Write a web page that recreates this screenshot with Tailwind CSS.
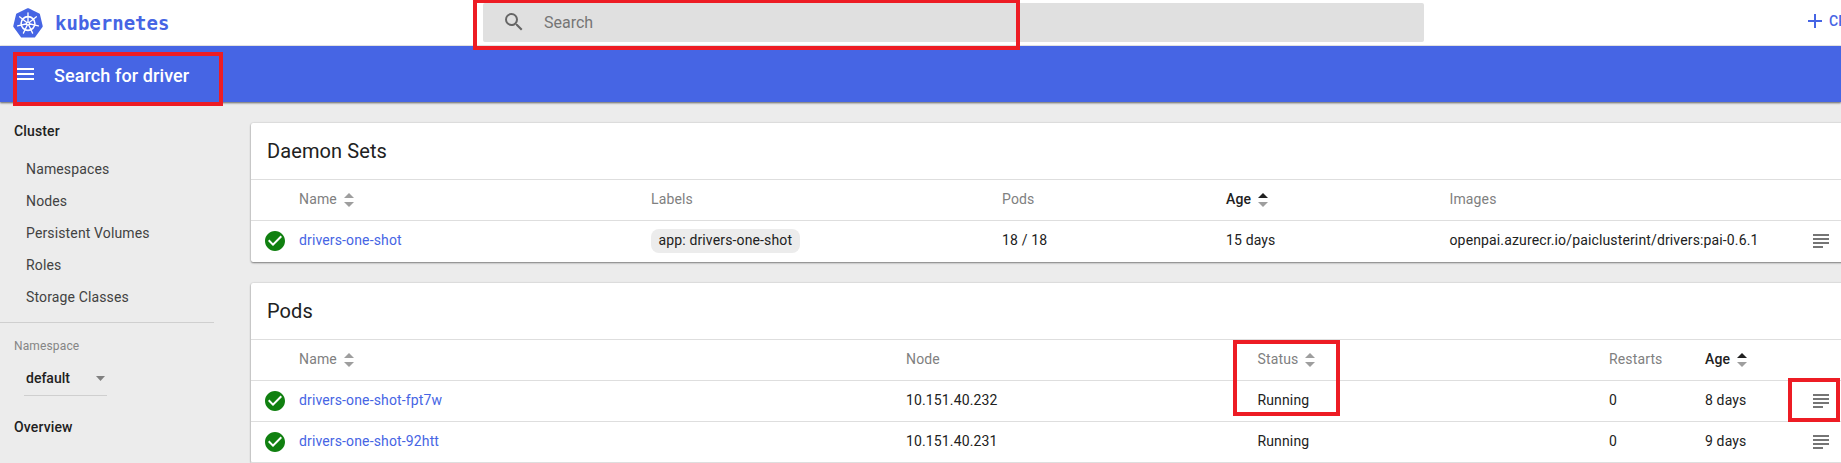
<!DOCTYPE html>
<html lang="en">
<head>
<meta charset="utf-8">
<title>Kubernetes Dashboard</title>
<script src="https://cdn.jsdelivr.net/npm/@tailwindcss/browser@4"></script>
</head>
<body class="relative flex h-[463px] w-[1841px] flex-col overflow-hidden bg-[#ececec] font-['Roboto',sans-serif] text-sm tracking-[0.01em] text-[#212121]">
<svg class="hidden">
  <symbol id="check" viewBox="0 0 24 24"><path fill="#108010" d="M12 2C6.48 2 2 6.48 2 12s4.480 10 10 10 10-4.480 10-10S17.520 2 12 2zm-2 15l-5-5 1.410-1.410L10 14.170l7.590-7.590L19 8l-9 9z"/></symbol>
  <symbol id="subject" viewBox="0 0 24 24"><path fill="#757575" d="M14 17H4v2h10v-2zm6-8H4v2h16V9zM4 15h16v-2H4v2zM4 5v2h16V5H4z"/></symbol>
  <symbol id="sort" viewBox="0 0 10 14"><path fill="currentColor" d="M0 5h10L5 0z"/><path fill="#9e9e9e" d="M0 9h10l-5 5z"/></symbol>
</svg>

<header class="flex h-[46px] shrink-0 items-start border-b border-[#ececec] bg-white">
  <div class="flex w-[483px] shrink-0 items-center pl-[13px]">
    <svg class="mt-[7px] h-[30px] w-[30px]" viewBox="0 0 30 30" fill="none">
      <path fill="#4665e4" stroke="#4665e4" stroke-width="2.500" stroke-linejoin="round" d="M15 1.500 25.700 6.600 28.500 18.300 21.200 28.200H8.800L1.500 18.300 4.300 6.600z"/>
      <circle cx="15" cy="15.500" r="6.900" stroke="#fff" stroke-width="1.600"/>
      <path stroke="#fff" stroke-width="1.300" stroke-linecap="round" d="M15 15.500V4.800M15 15.500 23.400 8.800M15 15.500 25.400 17.900M15 15.500 19.600 25.100M15 15.500 10.400 25.100M15 15.500 4.600 17.900M15 15.500 6.600 8.800"/>
      <circle cx="15" cy="15.500" r="2" fill="#fff"/><circle cx="15" cy="15.500" r=".8" fill="#4665e4"/>
    </svg>
    <span class="mt-2 ml-3 font-['DejaVu_Sans_Mono',monospace] text-[19px] leading-[30px] font-bold tracking-normal text-[#4665e4]">kubernetes</span>
  </div>
  <div class="mt-[3px] flex h-[39px] w-[941px] shrink-0 items-center rounded-xs bg-[#e0e0e0] pl-[19px] text-base tracking-normal text-[#757575]">
    <svg class="-mt-px mr-[18px] size-6" viewBox="0 0 24 24"><path fill="#666" d="M15.500 14h-.79l-.28-.27A6.471 6.471 0 0 0 16 9.500 6.500 6.500 0 1 0 9.500 16c1.610 0 3.090-.59 4.230-1.570l.27.28v.79l5 4.990L20.490 19l-4.990-5zm-6 0C7.010 14 5 11.990 5 9.500S7.010 5 9.500 5 14 7.010 14 9.500 11.990 14 9.500 14z"/></svg>
    <span>Search</span>
  </div>
  <div class="ml-[378.500px] flex shrink-0 items-center gap-[2.500px] pt-[9px] text-[#4665e4]">
    <svg class="size-6" viewBox="0 0 24 24"><path fill="currentColor" d="M19 13h-6v6h-2v-6H5v-2h6V5h2v6h6v2z"/></svg>
    <span class="font-medium">CREATE</span>
  </div>
</header>

<div class="z-10 flex h-14 shrink-0 items-center bg-[#4665e4] pl-[13px] text-white shadow-[0_1px_2px_rgba(0,0,0,0.6)]">
  <svg class="mr-[17px] size-6" viewBox="0 0 24 24"><path fill="#fff" d="M3 18h18v-2H3v2zm0-5h18v-2H3v2zm0-7v2h18V6H3z"/></svg>
  <h1 class="pt-[3px] text-lg leading-6 font-medium tracking-[0.1px]">Search for driver</h1>
</div>

<div class="flex min-h-0 flex-1">
  <nav class="w-[214px] shrink-0 pt-[13px]">
    <div class="h-8 pl-3.5 leading-8 font-medium">Cluster</div>
    <ul class="mt-1.5 pl-[26px] leading-8 text-[#424242]">
      <li>Namespaces</li><li>Nodes</li><li>Persistent Volumes</li><li>Roles</li><li>Storage Classes</li>
    </ul>
    <div class="mt-[9px] border-t border-[#cfcfcf] pt-[15px] pl-3.5">
      <div class="text-xs leading-4 text-[#858585]">Namespace</div>
      <div class="mt-[13px] ml-2.5 flex h-[29px] w-[83px] items-center justify-between border-b border-[#cfcfcf] pr-0.5 pb-1.5 pl-0.5">
        <span class="font-medium tracking-normal">default</span>
        <svg class="h-[5px] w-[9px]" viewBox="0 0 9 5"><path fill="#808080" d="M0 0h9L4.500 5z"/></svg>
      </div>
      <div class="mt-[21px] leading-5 font-medium">Overview</div>
    </div>
  </nav>

  <main class="ml-[37px] w-[1620px] shrink-0 pt-[21px]">
    <section class="rounded-xs bg-white shadow-[0_1px_2px_rgba(0,0,0,0.45),0_0_2px_rgba(0,0,0,0.15)]">
      <h2 class="flex h-14 items-center pl-4 text-xl tracking-[0.1px]">Daemon Sets</h2>
      <div class="grid h-[41px] grid-cols-[48px_352px_351px_224px_223.500px_1fr] items-center border-t border-[#dedede] text-[#808080] [&>span]:pb-0.5">
        <span></span>
        <span class="flex items-center gap-[7px]">Name <svg class="mt-0.5 h-3.5 w-2.5 text-[#9e9e9e]"><use href="#sort"/></svg></span>
        <span>Labels</span><span>Pods</span>
        <span class="flex items-center gap-[7px] font-medium text-[#212121]">Age <svg class="mt-0.5 h-3.5 w-2.5"><use href="#sort"/></svg></span>
        <span>Images</span>
      </div>
      <div class="grid h-[42px] grid-cols-[48px_352px_351px_224px_223.500px_359.500px_24px] items-center border-t border-[#dedede] pb-px [&>a]:pb-0.5 [&>span]:pb-0.5">
        <svg class="ml-3 size-6"><use href="#check"/></svg>
        <a class="text-[#4665e4]">drivers-one-shot</a>
        <div class="flex"><span class="rounded-lg bg-[#ececec] px-[7.500px] pb-0.5 leading-[22px]">app: drivers-one-shot</span></div>
        <span>18 / 18</span><span>15 days</span>
        <span>openpai.azurecr.io/paiclusterint/drivers:pai-0.6.1</span>
        <svg class="size-6"><use href="#subject"/></svg>
      </div>
    </section>

    <section class="mt-[21px] rounded-xs bg-white shadow-[0_1px_2px_rgba(0,0,0,0.45),0_0_2px_rgba(0,0,0,0.15)]">
      <h2 class="flex h-14 items-center pl-4 text-xl tracking-[0.1px]">Pods</h2>
      <div class="grid h-[41px] grid-cols-[48px_607px_351.500px_351.500px_96px_1fr] items-center border-t border-[#dedede] text-[#808080] [&>span]:pb-0.5">
        <span></span>
        <span class="flex items-center gap-[7px]">Name <svg class="mt-0.5 h-3.5 w-2.5 text-[#9e9e9e]"><use href="#sort"/></svg></span>
        <span>Node</span>
        <span class="flex items-center gap-[7px]">Status <svg class="mt-0.5 h-3.5 w-2.5 text-[#9e9e9e]"><use href="#sort"/></svg></span>
        <span>Restarts</span>
        <span class="flex items-center gap-[7px] font-medium text-[#212121]">Age <svg class="mt-0.5 h-3.5 w-2.5"><use href="#sort"/></svg></span>
      </div>
      <div class="grid h-[41px] grid-cols-[48px_607px_351.500px_351.500px_96px_104px_24px] items-center border-t border-[#dedede] [&>a]:pb-0.5 [&>span]:pb-0.5">
        <svg class="ml-3 size-6"><use href="#check"/></svg>
        <a class="text-[#4665e4]">drivers-one-shot-fpt7w</a>
        <span>10.151.40.232</span><span>Running</span><span>0</span><span>8 days</span>
        <svg class="size-6"><use href="#subject"/></svg>
      </div>
      <div class="grid h-[42px] grid-cols-[48px_607px_351.500px_351.500px_96px_104px_24px] items-center border-y border-[#dedede] [&>a]:pb-0.5 [&>span]:pb-0.5">
        <svg class="ml-3 size-6"><use href="#check"/></svg>
        <a class="text-[#4665e4]">drivers-one-shot-92htt</a>
        <span>10.151.40.231</span><span>Running</span><span>0</span><span>9 days</span>
        <svg class="size-6"><use href="#subject"/></svg>
      </div>
    </section>
  </main>
</div>

<!-- Highlight boxes -->
<div class="absolute top-[-1px] left-[473px] z-20 h-[51px] w-[547px] border-4 border-[#ed1c24]"></div>
<div class="absolute top-[52px] left-[13px] z-20 h-[54px] w-[210px] border-4 border-[#ed1c24]"></div>
<div class="absolute top-[340px] left-[1233px] z-20 h-[76px] w-[107px] border-4 border-[#ed1c24]"></div>
<div class="absolute top-[378px] left-[1788px] z-20 h-[44px] w-[52px] border-4 border-[#ed1c24]"></div>
</body>
</html>
